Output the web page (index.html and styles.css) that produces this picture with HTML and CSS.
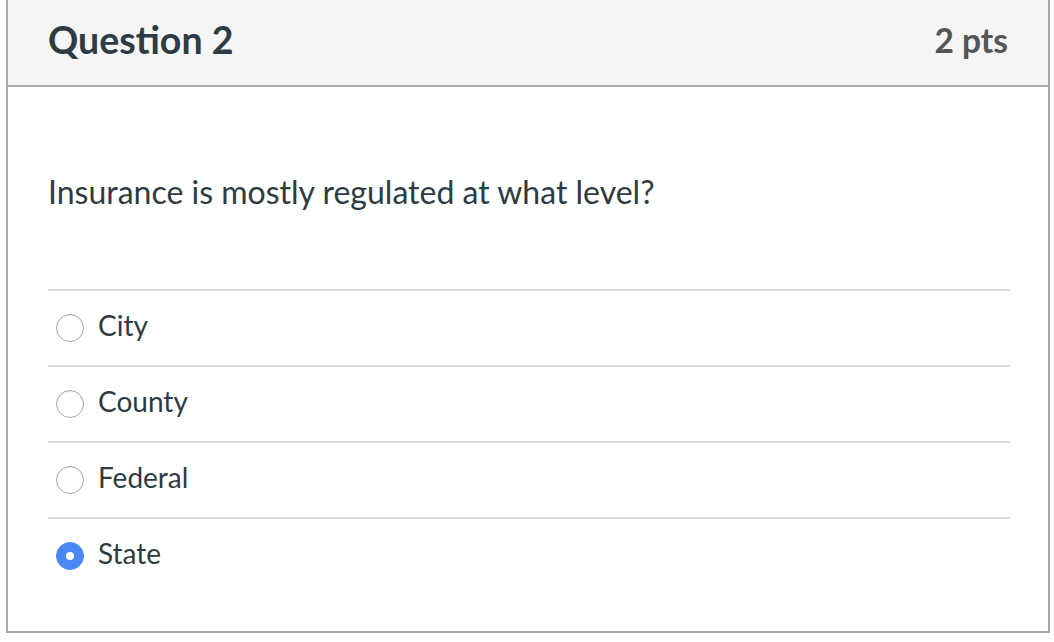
FILE: index.html
```html
<!DOCTYPE html>
<html lang="en">
<head>
<meta charset="utf-8">
<title>Question 2</title>
<link rel="stylesheet" href="styles.css">
</head>
<body>
<div class="card">
  <div class="card-header">
    <h2 class="title">Question 2</h2>
    <span class="points">2 pts</span>
  </div>
  <div class="card-body">
    <p class="question">Insurance is mostly regulated at what level?</p>
    <div class="answers">
      <div class="answer"><span class="radio"></span><span class="label">City</span></div>
      <div class="answer"><span class="radio"></span><span class="label">County</span></div>
      <div class="answer"><span class="radio"></span><span class="label">Federal</span></div>
      <div class="answer"><span class="radio checked"></span><span class="label">State</span></div>
    </div>
  </div>
</div>
</body>
</html>
```
FILE: styles.css
```css
html, body {
  margin: 0;
  padding: 0;
  background: #fff;
}
body {
  font-family: Lato, "Liberation Sans", sans-serif;
  color: #2d3b45;
}
.card {
  margin-left: 6px;
  width: 1044px;
  box-sizing: border-box;
  border: 2px solid #a9a9a9;
  border-top: none;
}
.card-header {
  height: 87px;
  box-sizing: border-box;
  background: #f5f5f5;
  border-bottom: 2px solid #a9a9a9;
  padding: 18px 40px 0 40px;
  display: flex;
  justify-content: space-between;
  align-items: flex-start;
}
.title {
  margin: 0;
  font-size: 37.5px;
  font-weight: 700;
  line-height: 43px;
  color: #2d3b45;
}
.points {
  font-size: 33.5px;
  font-weight: 700;
  line-height: 43px;
  padding-top: 1px;
  color: #555;
}
.card-body {
  padding: 81px 38px 38px 40px;
}
.question {
  margin: 0 0 74px 0;
  font-size: 32px;
  line-height: 47px;
}
.answer {
  height: 76px;
  box-sizing: border-box;
  border-top: 2px solid #dcdcdc;
  display: flex;
  align-items: center;
  padding-left: 8px;
}
.radio {
  width: 28px;
  height: 28px;
  box-sizing: border-box;
  border-radius: 50%;
  border: 1px solid #a8a8a8;
  background: #fff;
  box-shadow: inset 0 1px 2px rgba(0,0,0,0.08);
  flex: none;
  display: flex;
  align-items: center;
  justify-content: center;
}
.radio.checked {
  background: #4a89f4;
  border-color: #4a89f4;
  box-shadow: none;
}
.radio.checked::after {
  content: "";
  width: 8px;
  height: 8px;
  border-radius: 50%;
  background: #fff;
}
.label {
  margin-left: 14px;
  margin-bottom: 6px;
  font-size: 28px;
  line-height: 36px;
}
```
